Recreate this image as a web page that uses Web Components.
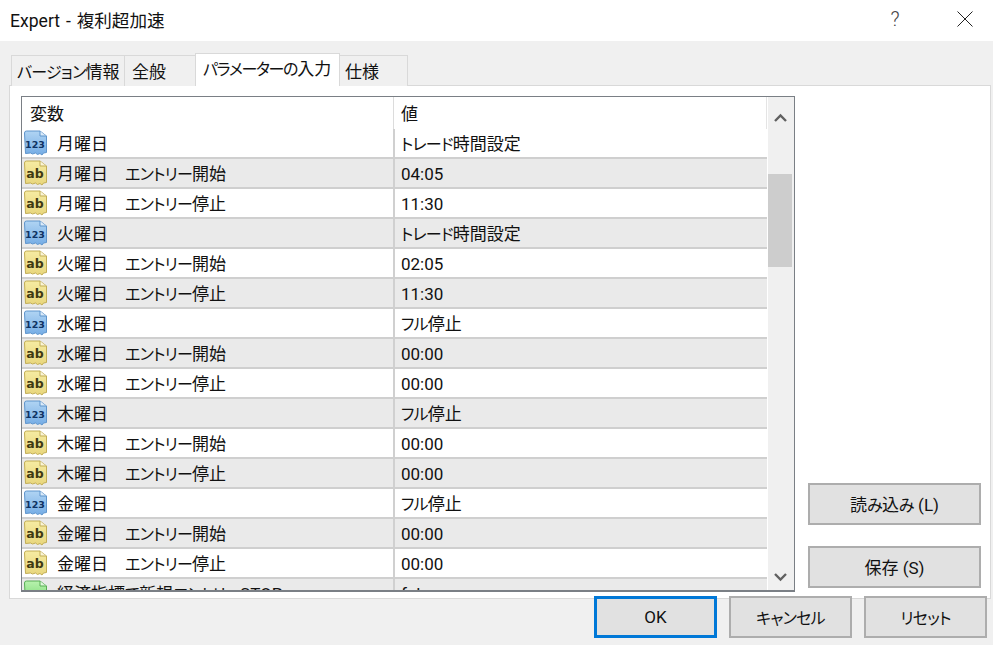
<!DOCTYPE html>
<html lang="ja">
<head>
<meta charset="utf-8">
<title>Expert</title>
<style>
  html, body { margin: 0; padding: 0; height: 100%; overflow: hidden; background: #f0f0f0; }
  body { font-family: Roboto, "Noto Sans CJK JP", sans-serif; font-size: 17px; color: #111; font-feature-settings: "palt"; }
  /* kana in the original UI font is much narrower than the kanji */
  .k { font-size: 16px; letter-spacing: -.75px; }
  tab-item[active] .k { letter-spacing: -1.300px; }
</style>
</head>
<body>
<expert-dialog heading="Expert - 複利超加速">
  <tab-strip slot="tabs">
    <tab-item w="114" pad="5">バージョン情報</tab-item>
    <tab-item w="72" pad="7">全般</tab-item>
    <tab-item w="145" pad="7" active>パラメーターの入力</tab-item>
    <tab-item w="69" pad="5">仕様</tab-item>
  </tab-strip>
  <param-list slot="list">
    <param-row kind="num" value="トレード時間設定">月曜日</param-row>
    <param-row kind="str" value="04:05" alt>月曜日　エントリー開始</param-row>
    <param-row kind="str" value="11:30">月曜日　エントリー停止</param-row>
    <param-row kind="num" value="トレード時間設定" alt>火曜日</param-row>
    <param-row kind="str" value="02:05">火曜日　エントリー開始</param-row>
    <param-row kind="str" value="11:30" alt>火曜日　エントリー停止</param-row>
    <param-row kind="num" value="フル停止">水曜日</param-row>
    <param-row kind="str" value="00:00" alt>水曜日　エントリー開始</param-row>
    <param-row kind="str" value="00:00">水曜日　エントリー停止</param-row>
    <param-row kind="num" value="フル停止" alt>木曜日</param-row>
    <param-row kind="str" value="00:00">木曜日　エントリー開始</param-row>
    <param-row kind="str" value="00:00" alt>木曜日　エントリー停止</param-row>
    <param-row kind="num" value="フル停止">金曜日</param-row>
    <param-row kind="str" value="00:00" alt>金曜日　エントリー開始</param-row>
    <param-row kind="str" value="00:00">金曜日　エントリー停止</param-row>
    <param-row kind="bool" value="false" alt>経済指標で新規エントリーSTOP</param-row>
  </param-list>
  <flat-button slot="side">読み込み (L)</flat-button>
  <flat-button slot="side">保存 (S)</flat-button>
  <flat-button slot="footer" primary>OK</flat-button>
  <flat-button slot="footer">キャンセル</flat-button>
  <flat-button slot="footer">リセット</flat-button>
</expert-dialog>

<script>
const narrowKana = (s) => s.replace(/[ぁ-ゖァ-ヶー]+/g, '<span class="k">$&</span>');

class ExpertDialog extends HTMLElement {
  constructor() {
    super();
    this.attachShadow({ mode: "open" });
  }

  connectedCallback() {
    this.shadowRoot.innerHTML = `
      <style>
        :host { display: flex; flex-direction: column; width: 993px; height: 645px; box-sizing: border-box; }
        .title {
          height: 41px; flex: none; background: #fff; display: flex; align-items: center;
          padding: 0 20px 0 10px; font-size: 17.600px;
        }
        .title span { flex: 1; word-spacing: 1.500px; margin-top: -2px; }
        .help { flex: none; width: 20px; margin-right: 52px; margin-top: -4px; text-align: center; font-size: 20px; font-weight: 300; color: #444; }
        .close { flex: none; display: block; margin-top: -4px; }
        .tabs { height: 33px; margin-top: 12px; padding-left: 11px; flex: none; position: relative; z-index: 1; }
        .panel {
          margin-left: 9px; width: 982px; height: 514px; flex: none; box-sizing: border-box;
          background: #fff; border: 1px solid #d9d9d9; margin-top: -1px;
          padding: 10px 11px 7px 11px; display: flex; gap: 13px;
        }
        .side { display: flex; flex-direction: column; justify-content: flex-end; gap: 21px; width: 173px; padding-bottom: 3px; }
        .footer { display: flex; gap: 12px; justify-content: flex-end; padding-right: 6px; margin-top: -3px; position: relative; flex: none; }
      </style>
      <div class="title">
        <span></span>
        <div class="help">?</div>
        <svg class="close" width="16" height="16" viewBox="0 0 16 16"><path d="M.5.5l15 15M15.500.500l-15 15" stroke="#222" fill="none"/></svg>
      </div>
      <div class="tabs"><slot name="tabs"></slot></div>
      <div class="panel">
        <slot name="list"></slot>
        <div class="side"><slot name="side"></slot></div>
      </div>
      <div class="footer"><slot name="footer"></slot></div>`;
    this.shadowRoot.querySelector(".title span").textContent = this.getAttribute("heading");
  }
}

class TabStrip extends HTMLElement {
  constructor() {
    super();
    this.attachShadow({ mode: "open" }).innerHTML = `
      <style>
        :host { display: flex; align-items: flex-end; height: 33px; }
      </style>
      <slot></slot>`;
  }
}

class TabItem extends HTMLElement {
  constructor() {
    super();
    this.attachShadow({ mode: "open" }).innerHTML = `
      <style>
        :host {
          display: block; box-sizing: border-box; height: 31px; margin-right: -1px;
          background: #f0f0f0; border: 1px solid #d9d9d9; border-bottom: none;
          line-height: 33px; white-space: nowrap;
        }
        :host([active]) {
          height: 33px; background: #fff; position: relative; line-height: 31px; z-index: 1;
        }
      </style>
      <slot></slot>`;
  }

  connectedCallback() {
    this.innerHTML = narrowKana(this.innerHTML);
    this.style.width = this.getAttribute("w") + "px";
    this.style.paddingLeft = this.getAttribute("pad") + "px";
  }
}

class ParamList extends HTMLElement {
  constructor() {
    super();
    this.attachShadow({ mode: "open" }).innerHTML = `
      <style>
        :host {
          display: flex; box-sizing: border-box; width: 774px; height: 496px; flex: none;
          border: 1px solid #7a7f85; border-bottom-width: 2px; overflow: hidden; background: #fff;
        }
        .grid { flex: 1; min-width: 0; overflow: hidden; padding-right: 1px; }
        .head { display: flex; height: 32px; line-height: 34px; background: #fff; }
        .head div:first-child { width: 372px; box-sizing: border-box; padding-left: 8px; border-right: 1px solid #dcdcdc; }
        .head div:last-child { flex: 1; padding-left: 7px; border-right: 1px solid #e4e4e4; box-sizing: border-box; }
        .bar { width: 26px; flex: none; box-sizing: border-box; padding-right: 2px; background: #f0f0f0; display: flex; flex-direction: column; align-items: center; }
        .up { height: 77px; flex: none; padding-top: 10px; box-sizing: border-box; }
        .thumb { width: 24px; height: 93px; background: #cdcdcd; flex: none; }
        .rest { flex: 1; display: flex; align-items: flex-end; padding-bottom: 8px; }
      </style>
      <div class="grid">
        <div class="head"><div>変数</div><div>値</div></div>
        <slot></slot>
      </div>
      <div class="bar">
        <div class="up"><svg width="13" height="10" viewBox="0 0 13 10"><path d="M1 8l5.500-5.500L12 8" fill="none" stroke="#606060" stroke-width="2.400"/></svg></div>
        <div class="thumb"></div>
        <div class="rest"><svg width="13" height="10" viewBox="0 0 13 10"><path d="M1 2l5.500 5.500L12 2" fill="none" stroke="#606060" stroke-width="2.400"/></svg></div>
      </div>`;
  }
}

const ICON_COLORS = {
  num: { hi: "#b0d4f3", lo: "#74ace5", edge: "#5f95cc", ink: "#0f3363", text: "123", size: 9.500 },
  str: { hi: "#f6eba2", lo: "#e8d67c", edge: "#c2ad55", ink: "#3f3a12", text: "ab", size: 12.500 },
  bool: { hi: "#b8f2ae", lo: "#6fd468", edge: "#58ad55", ink: "#1f5a1c", text: "", size: 10 },
};

class ParamRow extends HTMLElement {
  constructor() {
    super();
    this.attachShadow({ mode: "open" });
  }

  connectedCallback() {
    this.innerHTML = narrowKana(this.innerHTML);
    const c = ICON_COLORS[this.getAttribute("kind")];
    const id = "g" + this.getAttribute("kind");
    this.shadowRoot.innerHTML = `
      <style>
        :host {
          display: flex; box-sizing: border-box; height: 30px; background: #fff;
          border-bottom: 2px solid #cfcfcf; white-space: nowrap;
        }
        :host([alt]) { background: #eaeaea; }
        .name { width: 373px; flex: none; box-sizing: border-box; border-right: 2px solid #d0d0d0; display: flex; align-items: center; padding-left: 1px; gap: 9px; line-height: 30px; }
        .name svg { flex: none; }
        .label { padding-top: 2px; }
        .value { padding-left: 6px; line-height: 30px; }
        .k { font-size: 16px; letter-spacing: -.75px; }
      </style>
      <div class="name">
        <svg width="25" height="26" viewBox="0 0 25 26">
          <defs><linearGradient id="${id}" x1="0" y1="0" x2="0" y2="1"><stop offset="0" stop-color="${c.hi}"/><stop offset="1" stop-color="${c.lo}"/></linearGradient></defs>
          <path d="M1.500 3a2 2 0 0 1 2-2H17l6.500 5v16.500l-3 .5-1.500 2-2-1.500-2.500 1-2-1.500-3 1-2-1-5 .5z" fill="url(#${id})" stroke="${c.edge}"/>
          <path d="M17 1v5h6.500" fill="#fff" fill-opacity=".6" stroke="${c.edge}"/>
          <text x="12" y="${c.text === "ab" ? 18 : 17.500}" text-anchor="middle" font-family="'DejaVu Sans', sans-serif" font-weight="700" font-size="${c.size}" fill="${c.ink}">${c.text}</text>
        </svg>
        <div class="label"><slot></slot></div>
      </div>
      <div class="value">${narrowKana(this.getAttribute("value"))}</div>`;
  }
}

class FlatButton extends HTMLElement {
  constructor() {
    super();
    this.attachShadow({ mode: "open" }).innerHTML = `
      <style>
        :host {
          display: flex; align-items: center; justify-content: center; box-sizing: border-box;
          width: 123px; height: 42px; background: #e1e1e1; border: 2px solid #adadad;
        }
        :host([slot="side"]) { width: 173px; padding-bottom: 2px; }
        :host([primary]) { border: 3px solid #0078d7; }
        span { white-space: pre; }
      </style>
      <span><slot></slot></span>`;
  }

  connectedCallback() {
    this.innerHTML = narrowKana(this.innerHTML);
  }
}

customElements.define("expert-dialog", ExpertDialog);
customElements.define("tab-strip", TabStrip);
customElements.define("tab-item", TabItem);
customElements.define("param-list", ParamList);
customElements.define("param-row", ParamRow);
customElements.define("flat-button", FlatButton);
</script>
</body>
</html>
